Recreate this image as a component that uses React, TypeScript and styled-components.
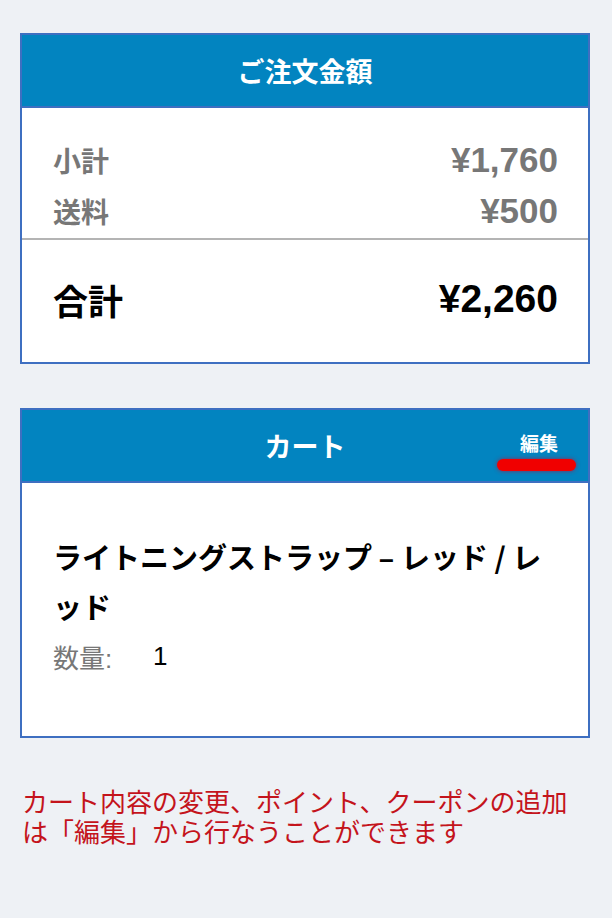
import styled, { createGlobalStyle } from 'styled-components';

const GlobalStyle = createGlobalStyle`
  html, body {
    margin: 0;
    padding: 0;
    background: #eef1f5;
  }
  body {
    font-family: "Noto Sans CJK JP", "Noto Sans", sans-serif;
  }
`;

const Page = styled.div`
  box-sizing: border-box;
  width: 612px;
  min-height: 918px;
  padding: 33px 22px 40px 20px;
  background: #eef1f5;
`;

// 白い枠付きのカード
const Card = styled.section`
  background: #ffffff;
  border: 2px solid #3e6fc1;
  margin-bottom: 44px;
`;

const CardHeader = styled.header`
  display: grid;
  grid-template-columns: 1fr auto 1fr;
  align-items: center;
  height: 71px;
  background: #0284c0;
  border-bottom: 2px solid #3e6fc1;
`;

const HeaderTitle = styled.h2`
  grid-column: 2;
  margin: 0;
  color: #ffffff;
  font-family: "Noto Sans CJK JP", sans-serif;
  font-size: 27px;
  font-weight: 700;
  line-height: 36px;
`;

// 編集リンク（下に赤いバー）
const EditLink = styled.a`
  grid-column: 3;
  justify-self: end;
  align-self: end;
  display: flex;
  flex-direction: column;
  align-items: center;
  gap: 5px;
  padding: 0 12px 10px 0;
  color: #ffffff;
  font-family: "Noto Sans CJK JP", sans-serif;
  font-size: 19px;
  font-weight: 700;
  line-height: 22px;
  text-decoration: none;
  cursor: pointer;
`;

const EditText = styled.span`
  padding-left: 5px;
`;

const RedBar = styled.span`
  display: block;
  width: 79px;
  height: 12px;
  border-radius: 6px;
  background: #f00000;
  box-shadow: 0 0 4px rgba(200, 0, 40, 0.7);
`;

const SummaryTop = styled.div`
  padding: 26px 30px 2px 31px;
  border-bottom: 2px solid #b4b4b4;
`;

const SummaryRow = styled.div`
  display: flex;
  justify-content: space-between;
  align-items: center;
  height: 51px;
`;

const RowLabel = styled.span<{ $total?: boolean }>`
  color: ${(p) => (p.$total ? '#000000' : '#777777')};
  font-family: "Noto Sans CJK JP", sans-serif;
  font-size: ${(p) => (p.$total ? '35px' : '28px')};
  font-weight: 700;
`;

const Price = styled.span<{ $total?: boolean }>`
  color: ${(p) => (p.$total ? '#000000' : '#777777')};
  font-family: "Liberation Sans", Arial, sans-serif;
  font-size: ${(p) => (p.$total ? '39px' : '35px')};
  font-weight: 700;
`;

const SummaryTotal = styled(SummaryRow)`
  height: 122px;
  padding: 0 30px 4px 31px;
  box-sizing: border-box;
`;

const CartBody = styled.div`
  padding: 48px 31px 60px 31px;
`;

const ProductName = styled.h3`
  margin: 0;
  color: #000000;
  font-family: "Noto Sans CJK JP", sans-serif;
  font-size: 29px;
  font-weight: 700;
  line-height: 50px;
`;

const QuantityRow = styled.div`
  display: flex;
  align-items: center;
  margin-top: 5px;
  height: 40px;
  font-size: 26px;
`;

const QuantityLabel = styled.span`
  color: #777777;
  font-family: "Liberation Sans", "Noto Sans CJK JP", sans-serif;
  width: 100px;
`;

const QuantityValue = styled.span`
  color: #000000;
  font-family: "Liberation Sans", Arial, sans-serif;
`;

const Note = styled.p`
  margin: 48px 0 0 2px;
  color: #c4141c;
  font-family: "Noto Sans CJK JP", sans-serif;
  font-size: 26px;
  line-height: 30px;
`;

export default function App() {
  return (
    <>
      <GlobalStyle />
      <Page>
        <Card>
          <CardHeader>
            <HeaderTitle>ご注文金額</HeaderTitle>
          </CardHeader>
          <SummaryTop>
            <SummaryRow>
              <RowLabel>小計</RowLabel>
              <Price>¥1,760</Price>
            </SummaryRow>
            <SummaryRow>
              <RowLabel>送料</RowLabel>
              <Price>¥500</Price>
            </SummaryRow>
          </SummaryTop>
          <SummaryTotal>
            <RowLabel $total>合計</RowLabel>
            <Price $total>¥2,260</Price>
          </SummaryTotal>
        </Card>

        <Card>
          <CardHeader>
            <HeaderTitle>カート</HeaderTitle>
            <EditLink>
              <EditText>編集</EditText>
              <RedBar />
            </EditLink>
          </CardHeader>
          <CartBody>
            <ProductName>ライトニングストラップ – レッド / レッド</ProductName>
            <QuantityRow>
              <QuantityLabel>数量:</QuantityLabel>
              <QuantityValue>1</QuantityValue>
            </QuantityRow>
          </CartBody>
        </Card>

        <Note>カート内容の変更、ポイント、クーポンの追加は「編集」から行なうことができます</Note>
      </Page>
    </>
  );
}
